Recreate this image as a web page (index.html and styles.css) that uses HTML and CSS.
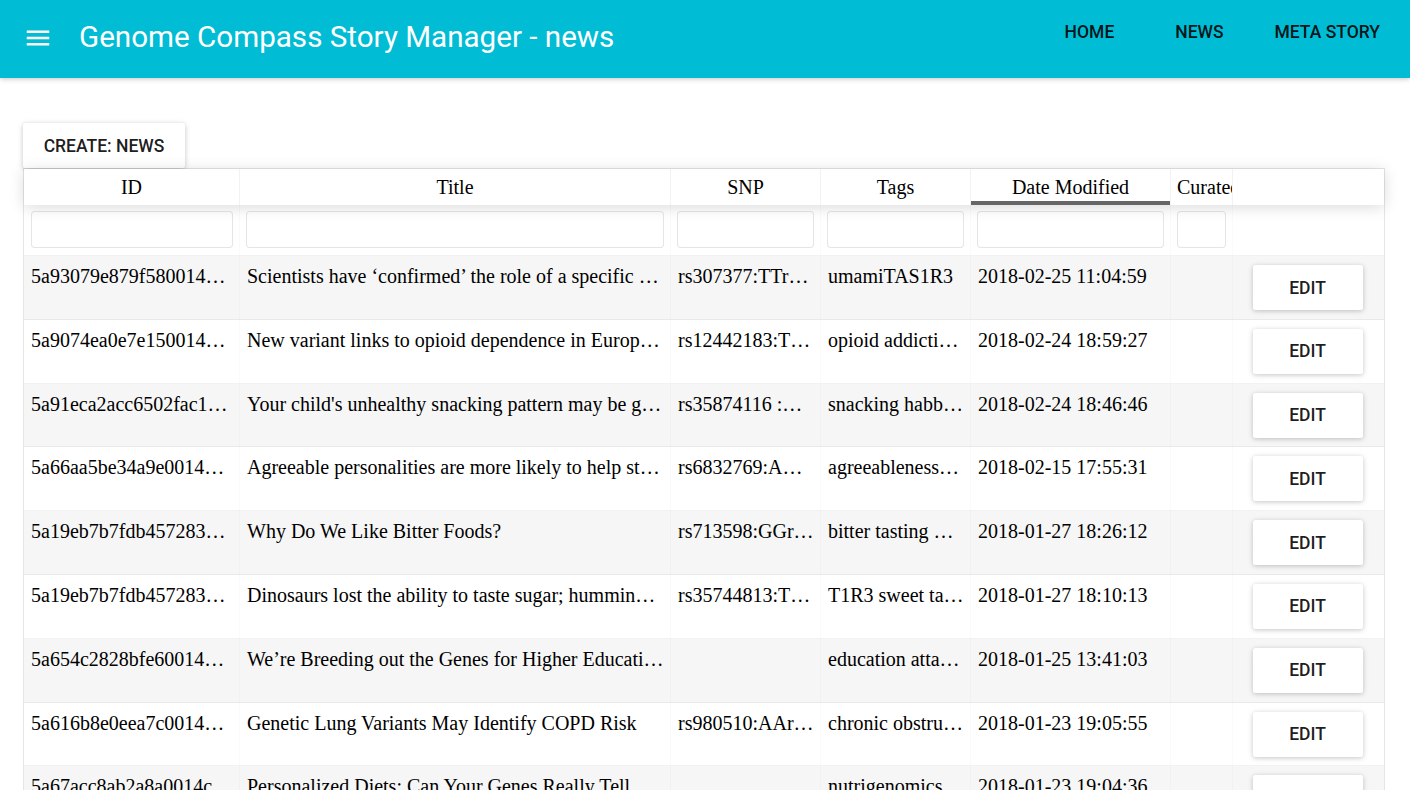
FILE: index.html
```html
<!DOCTYPE html>
<html>
<head>
<meta charset="utf-8">
<title>Genome Compass Story Manager - news</title>
<link rel="stylesheet" href="styles.css">
</head>
<body>
<header class="appbar">
  <button class="menu-btn" aria-label="menu">
    <svg width="30" height="30" viewBox="0 0 24 24"><path d="M3 18h18v-2H3v2zm0-5h18v-2H3v2zm0-7v2h18V6H3z" fill="#fff"/></svg>
  </button>
  <h1 class="app-title">Genome Compass Story Manager - news</h1>
  <nav class="nav">
    <a class="nav-btn">Home</a>
    <a class="nav-btn">News</a>
    <a class="nav-btn">Meta Story</a>
  </nav>
</header>

<main class="content">
  <button class="raised create-btn">Create: News</button>
  <div class="rt">
    <div class="rt-head">
      <div class="th c-id">ID</div>
      <div class="th c-title">Title</div>
      <div class="th c-snp">SNP</div>
      <div class="th c-tags">Tags</div>
      <div class="th c-date sorted">Date Modified</div>
      <div class="th c-cur">Curated</div>
      <div class="th c-edit"></div>
    </div>
    <div class="rt-filters">
      <div class="fc c-id"><input class="finput" type="text"></div>
      <div class="fc c-title"><input class="finput" type="text"></div>
      <div class="fc c-snp"><input class="finput" type="text"></div>
      <div class="fc c-tags"><input class="finput" type="text"></div>
      <div class="fc c-date"><input class="finput" type="text"></div>
      <div class="fc c-cur"><input class="finput" type="text"></div>
      <div class="fc c-edit"></div>
    </div>
    <div class="rt-body">
      <div class="tr odd">
        <div class="td c-id">5a93079e879f580014…</div>
        <div class="td c-title">Scientists have ‘confirmed’ the role of a specific …</div>
        <div class="td c-snp">rs307377:TTr…</div>
        <div class="td c-tags">umamiTAS1R3</div>
        <div class="td c-date">2018-02-25 11:04:59</div>
        <div class="td c-cur"></div>
        <div class="td c-edit"><button class="raised edit-btn">Edit</button></div>
      </div>
      <div class="tr">
        <div class="td c-id">5a9074ea0e7e150014…</div>
        <div class="td c-title">New variant links to opioid dependence in Europ…</div>
        <div class="td c-snp">rs12442183:T…</div>
        <div class="td c-tags">opioid addicti…</div>
        <div class="td c-date">2018-02-24 18:59:27</div>
        <div class="td c-cur"></div>
        <div class="td c-edit"><button class="raised edit-btn">Edit</button></div>
      </div>
      <div class="tr odd">
        <div class="td c-id">5a91eca2acc6502fac1…</div>
        <div class="td c-title">Your child's unhealthy snacking pattern may be g…</div>
        <div class="td c-snp">rs35874116 :…</div>
        <div class="td c-tags">snacking habb…</div>
        <div class="td c-date">2018-02-24 18:46:46</div>
        <div class="td c-cur"></div>
        <div class="td c-edit"><button class="raised edit-btn">Edit</button></div>
      </div>
      <div class="tr">
        <div class="td c-id">5a66aa5be34a9e0014…</div>
        <div class="td c-title">Agreeable personalities are more likely to help st…</div>
        <div class="td c-snp">rs6832769:A…</div>
        <div class="td c-tags">agreeableness…</div>
        <div class="td c-date">2018-02-15 17:55:31</div>
        <div class="td c-cur"></div>
        <div class="td c-edit"><button class="raised edit-btn">Edit</button></div>
      </div>
      <div class="tr odd">
        <div class="td c-id">5a19eb7b7fdb457283…</div>
        <div class="td c-title">Why Do We Like Bitter Foods?</div>
        <div class="td c-snp">rs713598:GGr…</div>
        <div class="td c-tags">bitter tasting …</div>
        <div class="td c-date">2018-01-27 18:26:12</div>
        <div class="td c-cur"></div>
        <div class="td c-edit"><button class="raised edit-btn">Edit</button></div>
      </div>
      <div class="tr">
        <div class="td c-id">5a19eb7b7fdb457283…</div>
        <div class="td c-title">Dinosaurs lost the ability to taste sugar; hummin…</div>
        <div class="td c-snp">rs35744813:T…</div>
        <div class="td c-tags">T1R3 sweet ta…</div>
        <div class="td c-date">2018-01-27 18:10:13</div>
        <div class="td c-cur"></div>
        <div class="td c-edit"><button class="raised edit-btn">Edit</button></div>
      </div>
      <div class="tr odd">
        <div class="td c-id">5a654c2828bfe60014…</div>
        <div class="td c-title">We’re Breeding out the Genes for Higher Educati…</div>
        <div class="td c-snp"></div>
        <div class="td c-tags">education atta…</div>
        <div class="td c-date">2018-01-25 13:41:03</div>
        <div class="td c-cur"></div>
        <div class="td c-edit"><button class="raised edit-btn">Edit</button></div>
      </div>
      <div class="tr">
        <div class="td c-id">5a616b8e0eea7c0014…</div>
        <div class="td c-title">Genetic Lung Variants May Identify COPD Risk</div>
        <div class="td c-snp">rs980510:AAr…</div>
        <div class="td c-tags">chronic obstru…</div>
        <div class="td c-date">2018-01-23 19:05:55</div>
        <div class="td c-cur"></div>
        <div class="td c-edit"><button class="raised edit-btn">Edit</button></div>
      </div>
      <div class="tr odd">
        <div class="td c-id">5a67acc8ab2a8a0014c…</div>
        <div class="td c-title">Personalized Diets: Can Your Genes Really Tell…</div>
        <div class="td c-snp"></div>
        <div class="td c-tags">nutrigenomics…</div>
        <div class="td c-date">2018-01-23 19:04:36</div>
        <div class="td c-cur"></div>
        <div class="td c-edit"><button class="raised edit-btn">Edit</button></div>
      </div>
    </div>
  </div>
</main>
</body>
</html>
```

FILE: styles.css
```css
* { box-sizing: border-box; }

html, body {
  margin: 0;
  padding: 0;
  background: #fff;
  overflow: hidden;
}

body {
  font-family: "Liberation Serif", "Times New Roman", serif;
  color: #000;
}

/* App bar */
.appbar {
  position: relative;
  z-index: 2;
  height: 78px;
  background: #00bcd4;
  display: flex;
  align-items: flex-start;
  padding-left: 23px;
  padding-right: 10px;
  box-shadow: 0 1px 6px rgba(0,0,0,0.12), 0 1px 4px rgba(0,0,0,0.12);
}

.menu-btn {
  width: 30px;
  height: 30px;
  margin-top: 23px;
  padding: 0;
  border: 0;
  background: transparent;
  display: flex;
}

.app-title {
  margin: 0 0 0 26px;
  font-family: Roboto, "Noto Sans", sans-serif;
  font-weight: 400;
  font-size: 29.6px;
  line-height: 75px;
  color: #fff;
  white-space: nowrap;
  flex: 1;
}

.nav {
  display: flex;
  margin-top: 9px;
}

.nav-btn {
  min-width: 110px;
  height: 45px;
  padding: 0 20px;
  display: flex;
  align-items: center;
  justify-content: center;
  font-family: Roboto, "Noto Sans", sans-serif;
  font-weight: 500;
  font-size: 17.5px;
  text-transform: uppercase;
  color: rgba(0,0,0,0.9);
  cursor: pointer;
}

/* Content */
.content {
  padding: 45px 0 0 23px;
}

.raised {
  background: #fff;
  border: 0;
  border-radius: 2.5px;
  box-shadow: 0 1px 6px rgba(0,0,0,0.12), 0 1px 4px rgba(0,0,0,0.12);
  font-family: Roboto, "Noto Sans", sans-serif;
  font-weight: 500;
  font-size: 17.5px;
  text-transform: uppercase;
  color: rgba(0,0,0,0.9);
  height: 45px;
  padding: 0 20px;
  cursor: pointer;
  display: block;
}

.create-btn {
  width: 162px;
  position: relative;
  z-index: 1;
}

.edit-btn {
  width: 110px;
  margin: 0 auto;
}

/* Table */
.rt {
  width: 1362px;
  border: 1px solid rgba(0,0,0,0.1);
  font-size: 20px;
}

.rt-head, .rt-filters, .tr {
  display: flex;
}

.c-id { width: 216px; }
.c-title { width: 431px; }
.c-snp { width: 150px; }
.c-tags { width: 150px; }
.c-date { width: 200px; }
.c-cur { width: 62px; }
.c-edit { flex: 1; }

.rt-head {
  position: relative;
  z-index: 1;
  height: 36px;
  background: #fff;
  box-shadow: 0 2px 15px 0 rgba(0,0,0,0.15);
}

.th {
  padding: 7px 6px 5px;
  line-height: 23px;
  text-align: center;
  white-space: nowrap;
  overflow: hidden;
  border-right: 1px solid rgba(0,0,0,0.05);
}

.th.c-edit { border-right: 0; }

.th.sorted {
  box-shadow: inset 0 -4px 0 0 rgba(0,0,0,0.6);
}

.rt-filters {
  height: 51px;
  border-bottom: 1px solid rgba(0,0,0,0.05);
}

.fc {
  padding: 6px 6px 7px;
  border-right: 1px solid rgba(0,0,0,0.02);
}

.fc.c-id { padding-left: 7px; }
.fc.c-edit { border-right: 0; }

.finput {
  display: block;
  width: 100%;
  height: 37px;
  border: 1px solid rgba(0,0,0,0.1);
  border-radius: 4px;
  background: #fff;
  outline: none;
  font-size: 20px;
  padding: 5px 8px;
}

.tr {
  height: 63.8px;
  border-bottom: 1px solid rgba(0,0,0,0.05);
}

.tr.odd { background: rgba(0,0,0,0.035); }

.td {
  padding: 9px 7px;
  line-height: 23px;
  white-space: nowrap;
  overflow: hidden;
  border-right: 1px solid rgba(0,0,0,0.02);
}

.td.c-edit { border-right: 0; padding: 9px 7px 9px 5px; }
```
